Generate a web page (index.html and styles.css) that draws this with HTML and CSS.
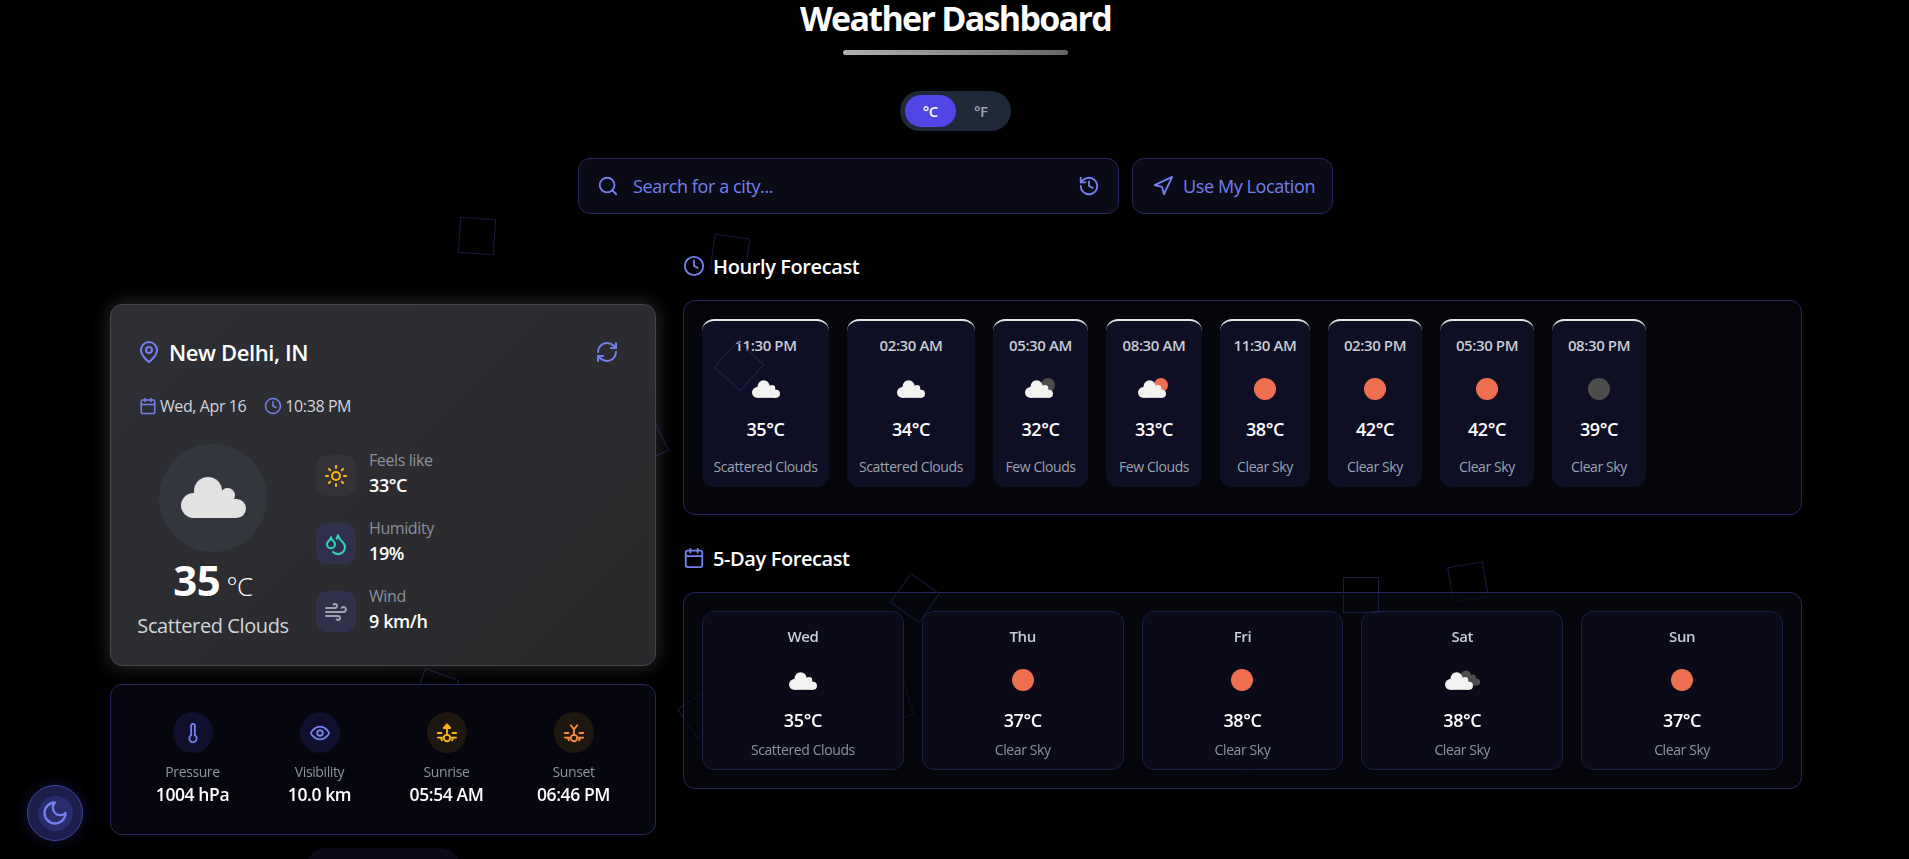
FILE: index.html
```html
<!DOCTYPE html>
<html lang="en">
  <head>
    <meta charset="UTF-8" />
    <meta name="viewport" content="width=device-width, initial-scale=1.0" />
    <title>Weather Dashboard</title>
    <link rel="stylesheet" href="styles.css">
  </head>
  <body>
    <svg class="icon-defs" xmlns="http://www.w3.org/2000/svg" aria-hidden="true">
      <symbol id="cloud" viewBox="0 0 65 41">
        <circle cx="27" cy="14" r="14" />
        <circle cx="46.5" cy="18.5" r="7.5" />
        <circle cx="12.5" cy="28.5" r="12.5" />
        <circle cx="55.5" cy="31.5" r="9.5" />
        <rect x="12" y="22" width="44" height="19" />
        <rect x="27" y="14" width="20" height="10" />
      </symbol>
      <symbol id="i-clock" viewBox="0 0 24 24">
        <circle cx="12" cy="12" r="10" />
        <polyline points="12 6 12 12 16 14" />
      </symbol>
      <symbol id="i-calendar" viewBox="0 0 24 24">
        <rect x="3" y="4" width="18" height="18" rx="2" />
        <path d="M16 2v4M8 2v4M3 10h18" />
      </symbol>
    </svg>

    <div class="shapes shapes-back">
      <span class="shape s1"></span>
      <span class="shape s2"></span>
      <span class="shape s3"></span>
      <span class="shape s4"></span>
      <span class="shape s5"></span>
      <span class="shape s6"></span>
      <span class="shape s7"></span>
      <span class="shape s8"></span>
    </div>

    <header class="page-header">
      <h1>Weather Dashboard</h1>
      <div class="title-bar"></div>
      <div class="unit-toggle">
        <button class="unit active">°C</button>
        <button class="unit">°F</button>
      </div>
      <div class="search-row">
        <div class="search-box">
          <svg class="line-icon" viewBox="0 0 24 24">
            <circle cx="11" cy="11" r="8" />
            <path d="m21 21-4.3-4.3" />
          </svg>
          <span class="search-placeholder">Search for a city...</span>
          <svg class="line-icon" viewBox="0 0 24 24">
            <path d="M3 12a9 9 0 1 0 9-9 9.75 9.75 0 0 0-6.74 2.74L3 8" />
            <path d="M3 3v5h5" />
            <path d="M12 7v5l4 2" />
          </svg>
        </div>
        <button class="location-btn">
          <svg class="line-icon" viewBox="0 0 24 24">
            <polygon points="3 11 22 2 13 21 11 13 3 11" />
          </svg>
          Use My Location
        </button>
      </div>
    </header>

    <main class="dashboard">
      <section class="left-col">
        <div class="current-card">
          <div class="current-top">
            <div class="city">
              <svg class="line-icon pin" viewBox="0 0 24 24">
                <path d="M20 10c0 6-8 12-8 12s-8-6-8-12a8 8 0 0 1 16 0Z" />
                <circle cx="12" cy="10" r="3" />
              </svg>
              <h2>New Delhi, IN</h2>
            </div>
            <svg class="line-icon refresh" viewBox="0 0 24 24">
              <path d="M3 12a9 9 0 0 1 9-9 9.75 9.75 0 0 1 6.74 2.74L21 8" />
              <path d="M21 3v5h-5" />
              <path d="M21 12a9 9 0 0 1-9 9 9.75 9.75 0 0 1-6.74-2.74L3 16" />
              <path d="M8 16H3v5" />
            </svg>
          </div>
          <div class="date-row">
            <svg class="line-icon small"><use href="#i-calendar" /></svg>
            <span>Wed, Apr 16</span>
            <svg class="line-icon small clock-gap"><use href="#i-clock" /></svg>
            <span>10:38 PM</span>
          </div>
          <div class="current-body">
            <div class="current-main">
              <div class="big-icon">
                <svg class="big-cloud"><use href="#cloud" /></svg>
              </div>
              <div class="big-temp">35<span class="big-unit">°C</span></div>
              <div class="big-desc">Scattered Clouds</div>
            </div>
            <ul class="details">
              <li class="detail">
                <span class="detail-icon faint">
                  <svg class="line-icon amber" viewBox="0 0 24 24">
                    <circle cx="12" cy="12" r="4" />
                    <path d="M12 2v2M12 20v2M4.93 4.93l1.41 1.41M17.66 17.66l1.41 1.41M2 12h2M20 12h2M6.34 17.66l-1.41 1.41M19.07 4.93l-1.41 1.41" />
                  </svg>
                </span>
                <div class="detail-text"><div class="detail-label">Feels like</div><div class="detail-value">33°C</div></div>
              </li>
              <li class="detail">
                <span class="detail-icon">
                  <svg class="line-icon teal" viewBox="0 0 24 24">
                    <path d="M7 16.3c2.2 0 4-1.83 4-4.05 0-1.16-.57-2.26-1.71-3.19S7.29 6.75 7 5.3c-.29 1.45-1.14 2.84-2.29 3.76S3 11.1 3 12.25c0 2.22 1.8 4.05 4 4.05z" />
                    <path d="M12.56 6.6A10.97 10.97 0 0 0 14 3.02c.5 2.5 2 4.9 4 6.5s3 3.5 3 5.5a6.98 6.98 0 0 1-11.91 4.97" />
                  </svg>
                </span>
                <div class="detail-text"><div class="detail-label">Humidity</div><div class="detail-value">19%</div></div>
              </li>
              <li class="detail">
                <span class="detail-icon">
                  <svg class="line-icon grey" viewBox="0 0 24 24">
                    <path d="M17.7 7.7a2.5 2.5 0 1 1 1.8 4.3H2" />
                    <path d="M9.6 4.6A2 2 0 1 1 11 8H2" />
                    <path d="M12.6 19.4A2 2 0 1 0 14 16H2" />
                  </svg>
                </span>
                <div class="detail-text"><div class="detail-label">Wind</div><div class="detail-value">9 km/h</div></div>
              </li>
            </ul>
          </div>
        </div>

        <div class="stats-card">
          <div class="stat">
            <span class="stat-icon">
              <svg class="line-icon" viewBox="0 0 24 24">
                <path d="M14 4v10.54a4 4 0 1 1-4 0V4a2 2 0 0 1 4 0Z" />
              </svg>
            </span>
            <div class="stat-label">Pressure</div>
            <div class="stat-value">1004 hPa</div>
          </div>
          <div class="stat">
            <span class="stat-icon">
              <svg class="line-icon" viewBox="0 0 24 24">
                <path d="M2 12s3-7 10-7 10 7 10 7-3 7-10 7-10-7-10-7Z" />
                <circle cx="12" cy="12" r="3" />
              </svg>
            </span>
            <div class="stat-label">Visibility</div>
            <div class="stat-value">10.0 km</div>
          </div>
          <div class="stat">
            <span class="stat-icon warm">
              <svg class="line-icon amber" viewBox="0 0 24 24">
                <path d="M12 3v11M2 12h4M18 12h4M2 17h5M22 17h-5M5 17l1.5 3M19 17l-1.5 3" />
                <path class="solid" d="M8.5 6.5 12 2.5l3.5 4Z" />
                <circle cx="12" cy="17.5" r="3.5" />
              </svg>
            </span>
            <div class="stat-label">Sunrise</div>
            <div class="stat-value">05:54 AM</div>
          </div>
          <div class="stat">
            <span class="stat-icon warm">
              <svg class="line-icon orange" viewBox="0 0 24 24">
                <path d="M12 8v6M8.5 3.5 12 8l3.5-4.5M2 12h4M18 12h4M2 17h5M22 17h-5M5 17l1.5 3M19 17l-1.5 3" />
                <circle cx="12" cy="17.5" r="3.5" />
              </svg>
            </span>
            <div class="stat-label">Sunset</div>
            <div class="stat-value">06:46 PM</div>
          </div>
        </div>
        <div class="more-pill"></div>
      </section>

      <section class="right-col">
        <h3 class="section-title">
          <svg class="line-icon"><use href="#i-clock" /></svg>
          Hourly Forecast
        </h3>
        <div class="panel hourly-panel">
          <div class="hourly-strip">
            <div class="hour-card">
              <div class="hour-time">11:30 PM</div>
              <svg class="wx-icon" viewBox="0 0 40 24"><use href="#cloud" x="6" y="2" width="28" height="18" class="wx-cloud" /></svg>
              <div class="hour-temp">35°C</div>
              <div class="hour-desc">Scattered Clouds</div>
            </div>
            <div class="hour-card">
              <div class="hour-time">02:30 AM</div>
              <svg class="wx-icon" viewBox="0 0 40 24"><use href="#cloud" x="6" y="2" width="28" height="18" class="wx-cloud" /></svg>
              <div class="hour-temp">34°C</div>
              <div class="hour-desc">Scattered Clouds</div>
            </div>
            <div class="hour-card">
              <div class="hour-time">05:30 AM</div>
              <svg class="wx-icon" viewBox="0 0 40 24">
                <circle cx="27" cy="7" r="7" class="wx-moon" />
                <use href="#cloud" x="4" y="2" width="28" height="18" class="wx-cloud" />
              </svg>
              <div class="hour-temp">32°C</div>
              <div class="hour-desc">Few Clouds</div>
            </div>
            <div class="hour-card">
              <div class="hour-time">08:30 AM</div>
              <svg class="wx-icon" viewBox="0 0 40 24">
                <circle cx="27" cy="7" r="7" class="wx-sun" />
                <use href="#cloud" x="4" y="2" width="28" height="18" class="wx-cloud" />
              </svg>
              <div class="hour-temp">33°C</div>
              <div class="hour-desc">Few Clouds</div>
            </div>
            <div class="hour-card">
              <div class="hour-time">11:30 AM</div>
              <svg class="wx-icon" viewBox="0 0 40 24"><circle cx="20" cy="11" r="11" class="wx-sun" /></svg>
              <div class="hour-temp">38°C</div>
              <div class="hour-desc">Clear Sky</div>
            </div>
            <div class="hour-card">
              <div class="hour-time">02:30 PM</div>
              <svg class="wx-icon" viewBox="0 0 40 24"><circle cx="20" cy="11" r="11" class="wx-sun" /></svg>
              <div class="hour-temp">42°C</div>
              <div class="hour-desc">Clear Sky</div>
            </div>
            <div class="hour-card">
              <div class="hour-time">05:30 PM</div>
              <svg class="wx-icon" viewBox="0 0 40 24"><circle cx="20" cy="11" r="11" class="wx-sun" /></svg>
              <div class="hour-temp">42°C</div>
              <div class="hour-desc">Clear Sky</div>
            </div>
            <div class="hour-card">
              <div class="hour-time">08:30 PM</div>
              <svg class="wx-icon" viewBox="0 0 40 24"><circle cx="20" cy="11" r="11" class="wx-moon" /></svg>
              <div class="hour-temp">39°C</div>
              <div class="hour-desc">Clear Sky</div>
            </div>
          </div>
        </div>

        <h3 class="section-title day-title">
          <svg class="line-icon"><use href="#i-calendar" /></svg>
          5-Day Forecast
        </h3>
        <div class="panel days-panel">
          <div class="day-card">
            <div class="day-name">Wed</div>
            <svg class="wx-icon" viewBox="0 0 40 24"><use href="#cloud" x="6" y="3" width="28" height="18" class="wx-cloud" /></svg>
            <div class="day-temp">35°C</div>
            <div class="day-desc">Scattered Clouds</div>
          </div>
          <div class="day-card">
            <div class="day-name">Thu</div>
            <svg class="wx-icon" viewBox="0 0 40 24"><circle cx="20" cy="11" r="11" class="wx-sun" /></svg>
            <div class="day-temp">37°C</div>
            <div class="day-desc">Clear Sky</div>
          </div>
          <div class="day-card">
            <div class="day-name">Fri</div>
            <svg class="wx-icon" viewBox="0 0 40 24"><circle cx="20" cy="11" r="11" class="wx-sun" /></svg>
            <div class="day-temp">38°C</div>
            <div class="day-desc">Clear Sky</div>
          </div>
          <div class="day-card">
            <div class="day-name">Sat</div>
            <svg class="wx-icon" viewBox="0 0 40 24">
              <use href="#cloud" x="14" y="1" width="24" height="16" class="wx-moon" />
              <use href="#cloud" x="3" y="3" width="28" height="18" class="wx-cloud" />
            </svg>
            <div class="day-temp">38°C</div>
            <div class="day-desc">Clear Sky</div>
          </div>
          <div class="day-card">
            <div class="day-name">Sun</div>
            <svg class="wx-icon" viewBox="0 0 40 24"><circle cx="20" cy="11" r="11" class="wx-sun" /></svg>
            <div class="day-temp">37°C</div>
            <div class="day-desc">Clear Sky</div>
          </div>
        </div>
      </section>
    </main>

    <div class="shapes shapes-front">
      <span class="shape s10"></span>
      <span class="shape s11"></span>
      <span class="shape s12"></span>
    </div>

    <button class="theme-btn" aria-label="toggle theme">
      <span class="theme-inner">
        <svg class="line-icon moon" viewBox="0 0 24 24">
          <path d="M12 3a6 6 0 0 0 9 9 9 9 0 1 1-9-9Z" />
        </svg>
      </span>
    </button>
  </body>
</html>
```

FILE: styles.css
```css
* {
  box-sizing: border-box;
}
html,
body {
  height: 859px;
  overflow: hidden;
}
body {
  margin: 0;
  background-color: #000;
  color: #fff;
  font-family: "Open Sans", "Noto Sans", sans-serif;
  letter-spacing: -0.025em;
}
h1,
h2,
h3,
ul {
  margin: 0;
  padding: 0;
}
button {
  font-family: inherit;
  letter-spacing: inherit;
  border: none;
  padding: 0;
}
.icon-defs {
  position: absolute;
  width: 0;
  height: 0;
}
.line-icon {
  width: 22px;
  height: 22px;
  flex: none;
  fill: none;
  stroke: #7480f0;
  stroke-width: 2;
  stroke-linecap: round;
  stroke-linejoin: round;
}

/* floating squares in the background */
.shapes {
  position: absolute;
  inset: 0;
  pointer-events: none;
}
.shapes-front {
  z-index: 3;
}
.shape {
  position: absolute;
  width: 36px;
  height: 36px;
  border: 1px solid #1a1a42;
}
.s1 { left: 459px; top: 218px; transform: rotate(4deg); }
.s2 { left: 712px; top: 236px; transform: rotate(8deg); }
.s3 { left: 627px; top: 424px; transform: rotate(-26deg); }
.s4 { left: 418px; top: 673px; transform: rotate(20deg); }
.s5 { left: 684px; top: 696px; transform: rotate(-34deg); }
.s6 { left: 874px; top: 685px; transform: rotate(-17deg); }
.s7 { left: 1450px; top: 564px; transform: rotate(-10deg); }
.s8 { left: 1237px; top: 732px; transform: rotate(-20deg); }
.s10 { left: 721px; top: 348px; border-color: #22224f; transform: rotate(42deg); }
.s11 { left: 897px; top: 580px; transform: rotate(35deg); }
.s12 { left: 1343px; top: 577px; }

/* header */
.page-header {
  position: relative;
  z-index: 1;
  display: flex;
  flex-direction: column;
  align-items: center;
  padding-left: 2px;
}
h1 {
  font-size: 34px;
  font-weight: 700;
  line-height: 36px;
  height: 50px;
  letter-spacing: -0.05em;
}
.title-bar {
  width: 225px;
  height: 5px;
  border-radius: 3px;
  background: linear-gradient(90deg, #b0b0b0, #666);
}
.unit-toggle {
  display: flex;
  width: 111px;
  height: 40px;
  margin-top: 36px;
  padding: 4px 5px;
  border-radius: 20px;
  background-color: #1f2937;
}
.unit {
  width: 51px;
  border-radius: 16px;
  font-size: 15px;
  font-weight: 600;
  color: #9ca3af;
  background: transparent;
}
.unit.active {
  background-color: #4f46e5;
  color: #fff;
}
.search-row {
  display: flex;
  gap: 13px;
  margin-top: 27px;
}
.search-box,
.location-btn {
  display: flex;
  align-items: center;
  height: 56px;
  border: 1px solid #26265e;
  border-radius: 12px;
  background-color: #0b0b18;
  color: #7480f0;
  font-size: 18px;
  white-space: nowrap;
}
.search-box {
  width: 541px;
  padding: 0 18px;
  gap: 14px;
}
.search-placeholder {
  flex: 1;
}
.location-btn {
  width: 201px;
  padding: 0 19px;
  gap: 9px;
}

/* two columns */
.dashboard {
  position: relative;
  z-index: 1;
  display: grid;
  grid-template-columns: 546px 1119px;
  gap: 27px;
  padding: 0 107px 0 110px;
}
.left-col {
  padding-top: 90px;
}
.right-col {
  padding-top: 40px;
}

/* current weather */
.current-card {
  height: 362px;
  padding: 35px 28px 0;
  border: 1px solid #45454f;
  border-radius: 12px;
  background: linear-gradient(135deg, #2e2f35, #29292b);
  box-shadow: 0 0 20px rgba(255, 255, 255, 0.18);
}
.current-top {
  display: flex;
  justify-content: space-between;
  align-items: center;
  padding-right: 8px;
}
.city {
  display: flex;
  align-items: center;
  gap: 8px;
}
.city h2 {
  font-size: 22px;
  font-weight: 600;
  line-height: 24px;
}
.pin,
.refresh {
  width: 24px;
  height: 24px;
}
.pin {
  margin-left: -2px;
}
.date-row {
  display: flex;
  align-items: center;
  gap: 3px;
  margin-top: 32px;
  font-size: 16px;
  line-height: 20px;
  color: #d1d5db;
}
.line-icon.small {
  width: 18px;
  height: 18px;
}
.clock-gap {
  margin-left: 15px;
}
.current-body {
  display: flex;
  margin-top: 28px;
}
.current-main {
  width: 148px;
  margin-right: 29px;
  display: flex;
  flex-direction: column;
  align-items: center;
}
.big-icon {
  display: flex;
  align-items: center;
  justify-content: center;
  width: 108px;
  height: 108px;
  border-radius: 50%;
  background-color: #34363e;
}
.big-cloud {
  width: 65px;
  height: 41px;
  margin-top: -2px;
  fill: #e2e2e2;
}
.big-temp {
  margin-top: 2px;
  font-size: 42px;
  font-weight: 700;
  line-height: 52px;
  display: flex;
  align-items: baseline;
}
.big-unit {
  margin-left: 6px;
  font-size: 26px;
  font-weight: 300;
}
.big-desc {
  font-size: 20px;
  line-height: 28px;
  color: #d1d5db;
  white-space: nowrap;
}
.details {
  list-style: none;
  display: flex;
  flex-direction: column;
  gap: 27px;
  margin-top: 11px;
}
.detail {
  display: flex;
  align-items: center;
  gap: 13px;
  height: 41px;
}
.detail-icon {
  display: flex;
  align-items: center;
  justify-content: center;
  width: 40px;
  height: 41px;
  border-radius: 12px;
  background-color: #30304a;
}
.detail-icon.faint {
  background-color: #323237;
}
.detail-icon .line-icon {
  width: 24px;
  height: 24px;
}
.amber { stroke: #fbb414; }
.teal { stroke: #2dd4bf; }
.grey { stroke: #9ca3af; }
.orange { stroke: #fb8c3c; }
.solid { fill: #fbb414; }
.detail-text {
  padding-bottom: 5px;
}
.detail-label {
  font-size: 16px;
  line-height: 20px;
  color: #8c909c;
}
.detail-value {
  margin-top: 3px;
  font-size: 18px;
  font-weight: 600;
  line-height: 24px;
}

/* pressure, visibility, sunrise, sunset */
.stats-card {
  display: grid;
  grid-template-columns: repeat(4, 1fr);
  height: 151px;
  margin-top: 18px;
  padding: 27px 18px 0;
  border: 1px solid #26265e;
  border-radius: 12px;
  background-color: rgba(9, 9, 20, 0.7);
  backdrop-filter: blur(8px);
}
.stat {
  display: flex;
  flex-direction: column;
  align-items: center;
}
.stat-icon {
  display: flex;
  align-items: center;
  justify-content: center;
  width: 40px;
  height: 41px;
  border-radius: 50%;
  background-color: #10102e;
}
.stat-icon.warm {
  background-color: #1e170f;
}
.stat-label {
  margin-top: 9px;
  font-size: 14px;
  line-height: 20px;
  color: #8e93a0;
}
.stat-value {
  font-size: 17.5px;
  font-weight: 600;
  line-height: 24px;
}
.more-pill {
  width: 154px;
  height: 40px;
  margin: 13px auto 0;
  border-radius: 20px;
  background-color: #0b0b18;
}

/* forecasts */
.section-title {
  display: flex;
  align-items: center;
  gap: 8px;
  height: 24px;
  font-size: 20px;
  font-weight: 600;
}
.panel {
  border: 1px solid #26265e;
  border-radius: 12px;
  background-color: rgba(9, 9, 20, 0.6);
}
.hourly-panel {
  height: 215px;
  margin-top: 22px;
  padding: 18px;
}
.hourly-strip {
  display: grid;
  grid-template-columns: 127px 128px 95px 96px 90px 94px 94px 94px;
  gap: 18px;
}
.hour-card {
  height: 168px;
  padding-top: 14px;
  display: flex;
  flex-direction: column;
  align-items: center;
  border-top: 2px solid #e5e5e5;
  border-radius: 12px;
  background-color: #0e0e24;
}
.hour-time,
.day-name {
  font-size: 15px;
  font-weight: 600;
  line-height: 20px;
  color: #c8ccd4;
}
.wx-icon {
  width: 40px;
  height: 24px;
  margin-top: 23px;
}
.wx-cloud {
  fill: #f2f2f0;
}
.wx-sun {
  fill: #ee7050;
}
.wx-moon {
  fill: #4d4d4d;
}
.hour-temp {
  margin-top: 15px;
  font-size: 18px;
  font-weight: 600;
  line-height: 24px;
}
.hour-desc {
  margin-top: 16px;
  font-size: 14px;
  line-height: 20px;
  color: #9ca3af;
  white-space: nowrap;
}
.day-title {
  margin-top: 31px;
}
.days-panel {
  display: grid;
  grid-template-columns: repeat(5, 1fr);
  gap: 18px;
  height: 197px;
  margin-top: 22px;
  padding: 18px;
}
.day-card {
  height: 159px;
  padding-top: 14px;
  display: flex;
  flex-direction: column;
  align-items: center;
  border: 1px solid #1d1d45;
  border-radius: 12px;
  background-color: rgba(12, 12, 30, 0.75);
  backdrop-filter: blur(8px);
}
.day-temp {
  margin-top: 15px;
  font-size: 18px;
  font-weight: 600;
  line-height: 24px;
}
.day-desc {
  margin-top: 8px;
  font-size: 14px;
  line-height: 20px;
  color: #8e93a0;
}

/* theme button */
.theme-btn {
  position: fixed;
  left: 27px;
  top: 785px;
  z-index: 4;
  display: flex;
  align-items: center;
  justify-content: center;
  width: 56px;
  height: 56px;
  border: 1px solid #44469e;
  border-radius: 50%;
  background-color: #1c1e4c;
  box-shadow: 0 0 16px rgba(79, 70, 229, 0.25);
}
.theme-inner {
  display: flex;
  align-items: center;
  justify-content: center;
  width: 35px;
  height: 35px;
  border-radius: 50%;
  background-color: #2a2d6b;
}
.moon {
  width: 28px;
  height: 28px;
}
```
